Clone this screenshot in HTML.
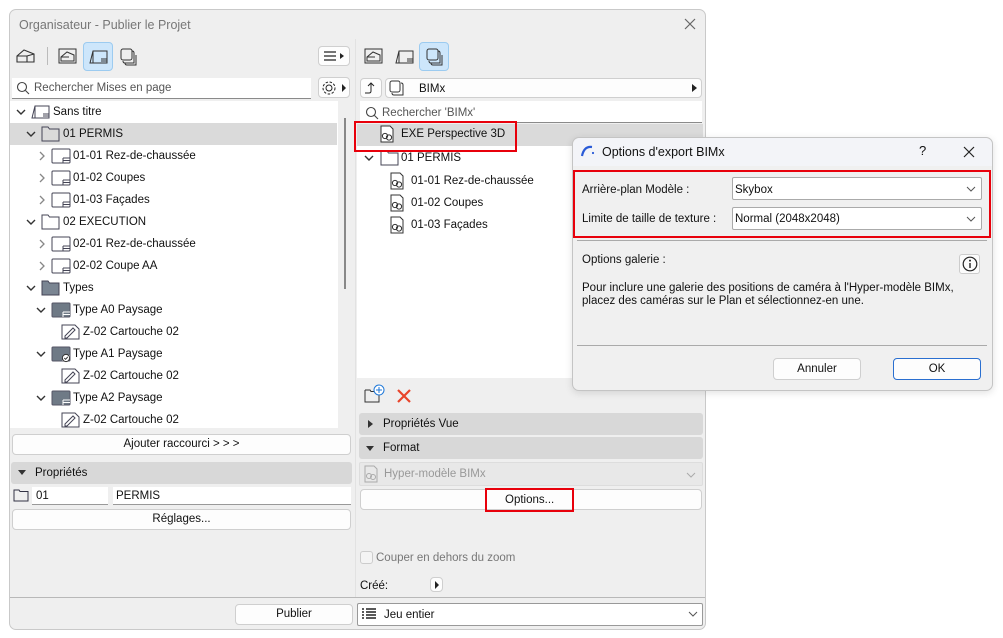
<!DOCTYPE html>
<html><head><meta charset="utf-8"><style>
*{box-sizing:border-box;margin:0;padding:0}
body{width:1003px;height:638px;background:#fff;font-family:"Liberation Sans",sans-serif;font-size:11.5px;color:#111;position:relative;overflow:hidden}
.a{position:absolute}
.win{left:9px;top:9px;width:697px;height:621px;background:#efefef;border:1px solid #c9c9c9;border-radius:7px}
.t{position:absolute;white-space:nowrap;line-height:14px}
.btn{position:absolute;background:#fdfdfd;border:1px solid #cfcfcf;border-radius:4px;text-align:center;line-height:18px}
.inp{position:absolute;background:#fff;border-bottom:1px solid #8a8a8a}
.hdr{position:absolute;background:#d8d8d8;border-radius:3px}
.red{position:absolute;border:2px solid #e8000b}
svg{position:absolute;overflow:visible}
</style></head><body>
<div class="a win"></div>
<div class="t" style="left:19px;top:18px;color:#777;font-size:12.5px">Organisateur - Publier le Projet</div>
<svg style="left:684px;top:18px" width="12" height="12"><path d="M1 1L11 11M11 1L1 11" stroke="#666" stroke-width="1.2"/></svg>

<svg style="left:16px;top:48px" width="20" height="16"><path d="M1 14V8L8 2L18 6V14ZM1 8H11L18 6M11 8V14" fill="none" stroke="#333" stroke-width="1.1"/></svg>
<div class="a" style="left:47px;top:47px;width:1px;height:18px;background:#bbb"></div>
<svg style="left:58px;top:48px" width="20" height="16"><rect x="1" y="1" width="17" height="14" fill="none" stroke="#333"/><path d="M3 13V9L9 4L16 7V13ZM3 9H11" fill="none" stroke="#333"/></svg>
<div class="a" style="left:83px;top:42px;width:30px;height:29px;background:#cde6fb;border:1px solid #9ccbf0;border-radius:4px"></div>
<svg style="left:89px;top:48px" width="20" height="18"><path d="M1 15L4 3H18V15ZM4 3V15M12 11H18M12 13H18" fill="none" stroke="#333"/></svg>
<svg style="left:120px;top:48px" width="18" height="18"><rect x="1" y="1" width="11" height="11" rx="2" fill="#efefef" stroke="#333"/><path d="M3 13Q3 15 5 15H14V5Q14 3 12 3" fill="none" stroke="#333"/><path d="M5 15Q5 17 7 17H16V7" fill="none" stroke="#333"/></svg>
<div class="btn" style="left:318px;top:46px;width:32px;height:20px"></div>
<svg style="left:324px;top:51px" width="22" height="12"><path d="M0 1H12M0 5H12M0 9H12" stroke="#222" stroke-width="1.2"/><path d="M16 2L20 5L16 8Z" fill="#222"/></svg>

<div class="inp" style="left:12px;top:78px;width:299px;height:21px"></div>
<svg style="left:16px;top:81px" width="14" height="14"><circle cx="6" cy="6" r="4.5" fill="none" stroke="#444" stroke-width="1.1"/><path d="M9.5 9.5L13 13" stroke="#444" stroke-width="1.1"/></svg>
<div class="t" style="left:34px;top:81px;color:#555">Rechercher Mises en page</div>
<div class="btn" style="left:318px;top:77px;width:32px;height:21px"></div>
<svg style="left:320px;top:80px" width="28" height="16"><circle cx="9" cy="8" r="3" fill="none" stroke="#222"/><circle cx="9" cy="8" r="6" fill="none" stroke="#222" stroke-dasharray="2.5 1.6"/><path d="M22 4L26 8L22 12Z" fill="#222"/></svg>

<div class="a" style="left:10px;top:101px;width:328px;height:327px;background:#fff"></div>
<div class="a" style="left:10px;top:123px;width:327px;height:22px;background:#dadada"></div>
<div class="a" style="left:344px;top:118px;width:2px;height:171px;background:#888"></div>
<div id="lt"></div>

<div class="btn" style="left:12px;top:434px;width:339px;height:21px">Ajouter raccourci &gt; &gt; &gt;</div>
<div class="hdr" style="left:11px;top:462px;width:341px;height:22px"></div>
<svg style="left:18px;top:470px" width="8" height="6"><path d="M0 0H8L4 5Z" fill="#333"/></svg>
<div class="t" style="left:35px;top:466px">Propriétés</div>
<svg style="left:13px;top:488px" width="16" height="14"><path d="M1 2H6L7 3.5H15V13H1Z" fill="none" stroke="#334"/></svg>
<div class="inp" style="left:32px;top:487px;width:76px;height:18px;border-bottom-color:#999"></div>
<div class="t" style="left:36px;top:489px">01</div>
<div class="inp" style="left:113px;top:487px;width:238px;height:18px;border-bottom-color:#999"></div>
<div class="t" style="left:116px;top:489px">PERMIS</div>
<div class="btn" style="left:12px;top:509px;width:339px;height:21px">Réglages...</div>

<div class="a" style="left:10px;top:597px;width:695px;height:1px;background:#b8b8b8"></div>
<div class="btn" style="left:235px;top:604px;width:118px;height:21px">Publier</div>
<div class="a" style="left:357px;top:603px;width:346px;height:23px;background:#fff;border:1px solid #999;border-radius:2px"></div>
<svg style="left:362px;top:608px" width="14" height="12"><path d="M0 1H2M0 4H2M0 7H2M0 10H2M4 1H14M4 4H14M4 7H14M4 10H14" stroke="#222" stroke-width="1.4"/></svg>
<div class="t" style="left:384px;top:608px">Jeu entier</div>
<svg style="left:688px;top:611px" width="10" height="6"><path d="M1 1L5 5L9 1" fill="none" stroke="#555"/></svg>

<div class="a" style="left:355px;top:39px;width:1px;height:558px;background:#e2e2e2"></div>
<svg style="left:364px;top:48px" width="20" height="16"><rect x="1" y="1" width="17" height="14" fill="none" stroke="#333"/><path d="M3 13V9L9 4L16 7V13ZM3 9H11" fill="none" stroke="#333"/></svg>
<svg style="left:395px;top:48px" width="20" height="18"><path d="M1 15L4 3H18V15ZM4 3V15M12 11H18M12 13H18" fill="none" stroke="#333"/></svg>
<div class="a" style="left:419px;top:42px;width:30px;height:29px;background:#cde6fb;border:1px solid #9ccbf0;border-radius:4px"></div>
<svg style="left:426px;top:48px" width="18" height="18"><rect x="1" y="1" width="11" height="11" rx="2" fill="#cde6fb" stroke="#333"/><path d="M3 13Q3 15 5 15H14V5Q14 3 12 3" fill="none" stroke="#333"/><path d="M5 15Q5 17 7 17H16V7" fill="none" stroke="#333"/></svg>
<div class="btn" style="left:360px;top:78px;width:22px;height:20px"></div>
<svg style="left:364px;top:81px" width="14" height="14"><path d="M1 12H5Q7 12 7 10V2M4 5L7 2L10 5" fill="none" stroke="#222"/></svg>
<div class="btn" style="left:385px;top:78px;width:317px;height:20px;text-align:left"></div>
<svg style="left:389px;top:80px" width="16" height="16"><rect x="1" y="1" width="10" height="11" rx="2" fill="#fff" stroke="#333"/><path d="M3 13Q3 15 5 15H14V5Q14 3 12 3" fill="none" stroke="#333"/></svg>
<div class="t" style="left:419px;top:82px">BIMx</div>
<svg style="left:692px;top:84px" width="6" height="8"><path d="M0 0L5 4L0 8Z" fill="#222"/></svg>
<div class="inp" style="left:360px;top:101px;width:342px;height:22px"></div>
<svg style="left:365px;top:106px" width="14" height="14"><circle cx="6" cy="6" r="4.5" fill="none" stroke="#444" stroke-width="1.1"/><path d="M9.5 9.5L13 13" stroke="#444" stroke-width="1.1"/></svg>
<div class="t" style="left:382px;top:106px;color:#555">Rechercher 'BIMx'</div>
<div class="a" style="left:357px;top:124px;width:346px;height:254px;background:#fff"></div>
<div class="a" style="left:357px;top:124px;width:346px;height:22px;background:#dadada"></div>
<div id="rt"></div>
<div class="red" style="left:354px;top:121px;width:163px;height:31px"></div>

<svg style="left:364px;top:384px" width="22" height="20"><path d="M1 6H6L7 7.5H10M1 6V18H15V11" fill="none" stroke="#333"/><circle cx="15" cy="6" r="5" fill="#fff" stroke="#1d77d8"/><path d="M15 3V9M12 6H18" stroke="#1d77d8"/></svg>
<svg style="left:397px;top:389px" width="14" height="14"><path d="M1 1L13 13M13 1L1 13" stroke="#e8442a" stroke-width="2.2"/></svg>
<div class="hdr" style="left:359px;top:413px;width:344px;height:22px"></div>
<svg style="left:368px;top:420px" width="6" height="8"><path d="M0 0L5 4L0 8Z" fill="#333"/></svg>
<div class="t" style="left:383px;top:417px">Propriétés Vue</div>
<div class="hdr" style="left:359px;top:437px;width:344px;height:22px"></div>
<svg style="left:366px;top:446px" width="8" height="6"><path d="M0 0H8L4 5Z" fill="#333"/></svg>
<div class="t" style="left:383px;top:441px">Format</div>
<div class="a" style="left:359px;top:462px;width:344px;height:24px;background:#e8e8e8;border:1px solid #ddd;border-radius:2px"></div>
<svg style="left:363px;top:465px" width="16" height="18"><path d="M2 1H11L14 4V17H2Z" fill="none" stroke="#aaa"/><circle cx="6" cy="11" r="2.5" fill="none" stroke="#aaa"/><circle cx="10" cy="12" r="2.5" fill="none" stroke="#aaa"/></svg>
<div class="t" style="left:384px;top:467px;color:#999">Hyper-modèle BIMx</div>
<svg style="left:686px;top:472px" width="10" height="6"><path d="M1 1L5 5L9 1" fill="none" stroke="#aaa"/></svg>
<div class="btn" style="left:360px;top:489px;width:342px;height:21px"></div>
<div class="t" style="left:505px;top:493px">Options...</div>
<div class="red" style="left:485px;top:488px;width:89px;height:24px"></div>
<div class="a" style="left:360px;top:551px;width:13px;height:13px;border:1px solid #ccc;border-radius:3px;background:#f4f4f4"></div>
<div class="t" style="left:376px;top:551px;color:#777">Couper en dehors du zoom</div>
<div class="t" style="left:360px;top:579px">Créé:</div>
<div class="btn" style="left:430px;top:577px;width:13px;height:15px"></div>
<svg style="left:435px;top:581px" width="5" height="8"><path d="M0 0L4 4L0 8Z" fill="#222"/></svg>

<div class="a" style="left:572px;top:137px;width:421px;height:254px;background:#f0f0f0;border:1px solid #c4c4c4;border-radius:7px;box-shadow:0 2px 8px rgba(0,0,0,.12)"></div>
<div class="a" style="left:573px;top:138px;width:419px;height:28px;background:#f3f4f8;border-radius:7px 7px 0 0"></div>
<svg style="left:581px;top:145px" width="14" height="12"><path d="M1 11Q3 1 11 2" fill="none" stroke="#2a5bd7" stroke-width="2.2"/><circle cx="12" cy="8" r="1.1" fill="#2a5bd7"/></svg>
<div class="t" style="left:602px;top:145px;font-size:12.5px">Options d'export BIMx</div>
<div class="t" style="left:919px;top:144px;font-size:13px">?</div>
<svg style="left:963px;top:146px" width="12" height="12"><path d="M1 1L11 11M11 1L1 11" stroke="#222" stroke-width="1.2"/></svg>
<div class="red" style="left:573px;top:170px;width:418px;height:68px"></div>
<div class="t" style="left:582px;top:183px">Arrière-plan Modèle :</div>
<div class="a" style="left:732px;top:177px;width:250px;height:23px;background:#fff;border:1px solid #aaa;border-radius:2px"></div>
<div class="t" style="left:735px;top:183px">Skybox</div>
<svg style="left:966px;top:186px" width="10" height="6"><path d="M1 1L5 5L9 1" fill="none" stroke="#555"/></svg>
<div class="t" style="left:582px;top:212px">Limite de taille de texture :</div>
<div class="a" style="left:732px;top:207px;width:250px;height:23px;background:#fff;border:1px solid #aaa;border-radius:2px"></div>
<div class="t" style="left:735px;top:212px">Normal (2048x2048)</div>
<svg style="left:966px;top:216px" width="10" height="6"><path d="M1 1L5 5L9 1" fill="none" stroke="#555"/></svg>
<div class="a" style="left:577px;top:240px;width:410px;height:1px;background:#aaa"></div>
<div class="t" style="left:582px;top:253px">Options galerie :</div>
<div class="a" style="left:959px;top:254px;width:21px;height:20px;background:#fbfbfb;border:1px solid #ccc;border-radius:3px"></div>
<svg style="left:962px;top:256px" width="16" height="16"><circle cx="8" cy="8" r="6.8" fill="none" stroke="#222" stroke-width="1.2"/><circle cx="8" cy="4.6" r="1" fill="#222"/><path d="M8 7V12" stroke="#222" stroke-width="1.4"/></svg>
<div class="t" style="left:582px;top:281px">Pour inclure une galerie des positions de caméra à l'Hyper-modèle BIMx,</div>
<div class="t" style="left:582px;top:294px">placez des caméras sur le Plan et sélectionnez-en une.</div>
<div class="a" style="left:577px;top:345px;width:410px;height:1px;background:#aaa"></div>
<div class="btn" style="left:773px;top:358px;width:88px;height:22px;line-height:20px">Annuler</div>
<div class="btn" style="left:893px;top:358px;width:88px;height:22px;line-height:20px;border-color:#2a6fd0">OK</div>

<script>
function chevDown(x,y){return `<svg style="left:${x}px;top:${y}px" width="10" height="6"><path d="M1 1L5 5L9 1" fill="none" stroke="#333" stroke-width="1.4"/></svg>`}
function chevRight(x,y){return `<svg style="left:${x}px;top:${y}px" width="6" height="10"><path d="M1 1L5 5L1 9" fill="none" stroke="#888" stroke-width="1.3"/></svg>`}
function folder(x,y,fill){return `<svg style="left:${x}px;top:${y}px" width="20" height="16"><path d="M1 1H7L8.5 3H18V15H1Z" fill="${fill||'none'}" stroke="#445"/></svg>`}
function layout(x,y){return `<svg style="left:${x}px;top:${y}px" width="20" height="16"><rect x="1" y="1" width="18" height="14" rx="1" fill="none" stroke="#445"/><path d="M12 10H19M12 12.5H19M12 10V15" fill="none" stroke="#445"/></svg>`}
function master(x,y,chk){return `<svg style="left:${x}px;top:${y}px" width="20" height="16"><rect x="1" y="1" width="18" height="14" rx="1" fill="#6f7a86" stroke="#556"/><path d="M12 10H19M12 12.5H19M12 10V15" fill="#eee" stroke="#fff"/>${chk?'<circle cx="15" cy="12" r="3.6" fill="#fff" stroke="#333"/><path d="M13.3 12L14.6 13.3L16.8 10.9" fill="none" stroke="#333"/>':''}</svg>`}
function draw(x,y){return `<svg style="left:${x}px;top:${y}px" width="20" height="16"><path d="M1 1H14L18 5V15H1Z" fill="none" stroke="#445"/><path d="M4 12L12 4L14 6L6 14H4Z" fill="none" stroke="#445"/></svg>`}
function bimx(x,y){return `<svg style="left:${x}px;top:${y}px" width="16" height="18"><path d="M2 1H11L14 4V17H2Z" fill="#fff" stroke="#333"/><circle cx="6" cy="11" r="2.6" fill="none" stroke="#333"/><circle cx="10" cy="12.5" r="2.6" fill="none" stroke="#333"/></svg>`}
function sans(x,y){return `<svg style="left:${x}px;top:${y}px" width="20" height="18"><path d="M1 15L4 3H18V15ZM4 3V15M12 11H18M12 13H18" fill="none" stroke="#445"/></svg>`}
function txt(x,y,s){return `<div class="t" style="left:${x}px;top:${y}px">${s}</div>`}
let h='';
const L=[
['d',0,'sans','Sans titre'],['d',1,'f','01 PERMIS'],['r',2,'l','01-01 Rez-de-chaussée'],['r',2,'l','01-02 Coupes'],['r',2,'l','01-03 Façades'],
['d',1,'f','02 EXECUTION'],['r',2,'l','02-01 Rez-de-chaussée'],['r',2,'l','02-02 Coupe AA'],['d',1,'fg','Types'],
['d',2,'m','Type A0 Paysage'],['',3,'dr','Z-02 Cartouche 02'],['d',2,'mc','Type A1 Paysage'],['',3,'dr','Z-02 Cartouche 02'],['d',2,'m','Type A2 Paysage'],['',3,'dr','Z-02 Cartouche 02']];
L.forEach((r,i)=>{const c=112+22*i;const cx=16+10*r[1];const ix=cx+15;
 if(r[0]=='d')h+=chevDown(cx,c-3); else if(r[0]=='r')h+=chevRight(cx+3,c-5);
 const k=r[2];
 if(k=='sans')h+=sans(ix,c-9);else if(k=='f')h+=folder(ix,c-8);else if(k=='fg')h+=folder(ix,c-8,'#7a8592');
 else if(k=='l')h+=layout(ix,c-8);else if(k=='m')h+=master(ix,c-8);else if(k=='mc')h+=master(ix,c-8,1);else h+=draw(ix,c-8);
 h+=txt(ix+22,c-7,r[3]);});
document.getElementById('lt').outerHTML=h;
let g='';
g+=bimx(379,125)+txt(401,127,'EXE Perspective 3D');
g+=chevDown(364,155)+folder(380,150)+txt(401,151,'01 PERMIS');
['01-01 Rez-de-chaussée','01-02 Coupes','01-03 Façades'].forEach((s,i)=>{const c=181+22*i;g+=bimx(389,c-9)+txt(411,c-7,s)});
document.getElementById('rt').outerHTML=g;
</script>
</body></html>
